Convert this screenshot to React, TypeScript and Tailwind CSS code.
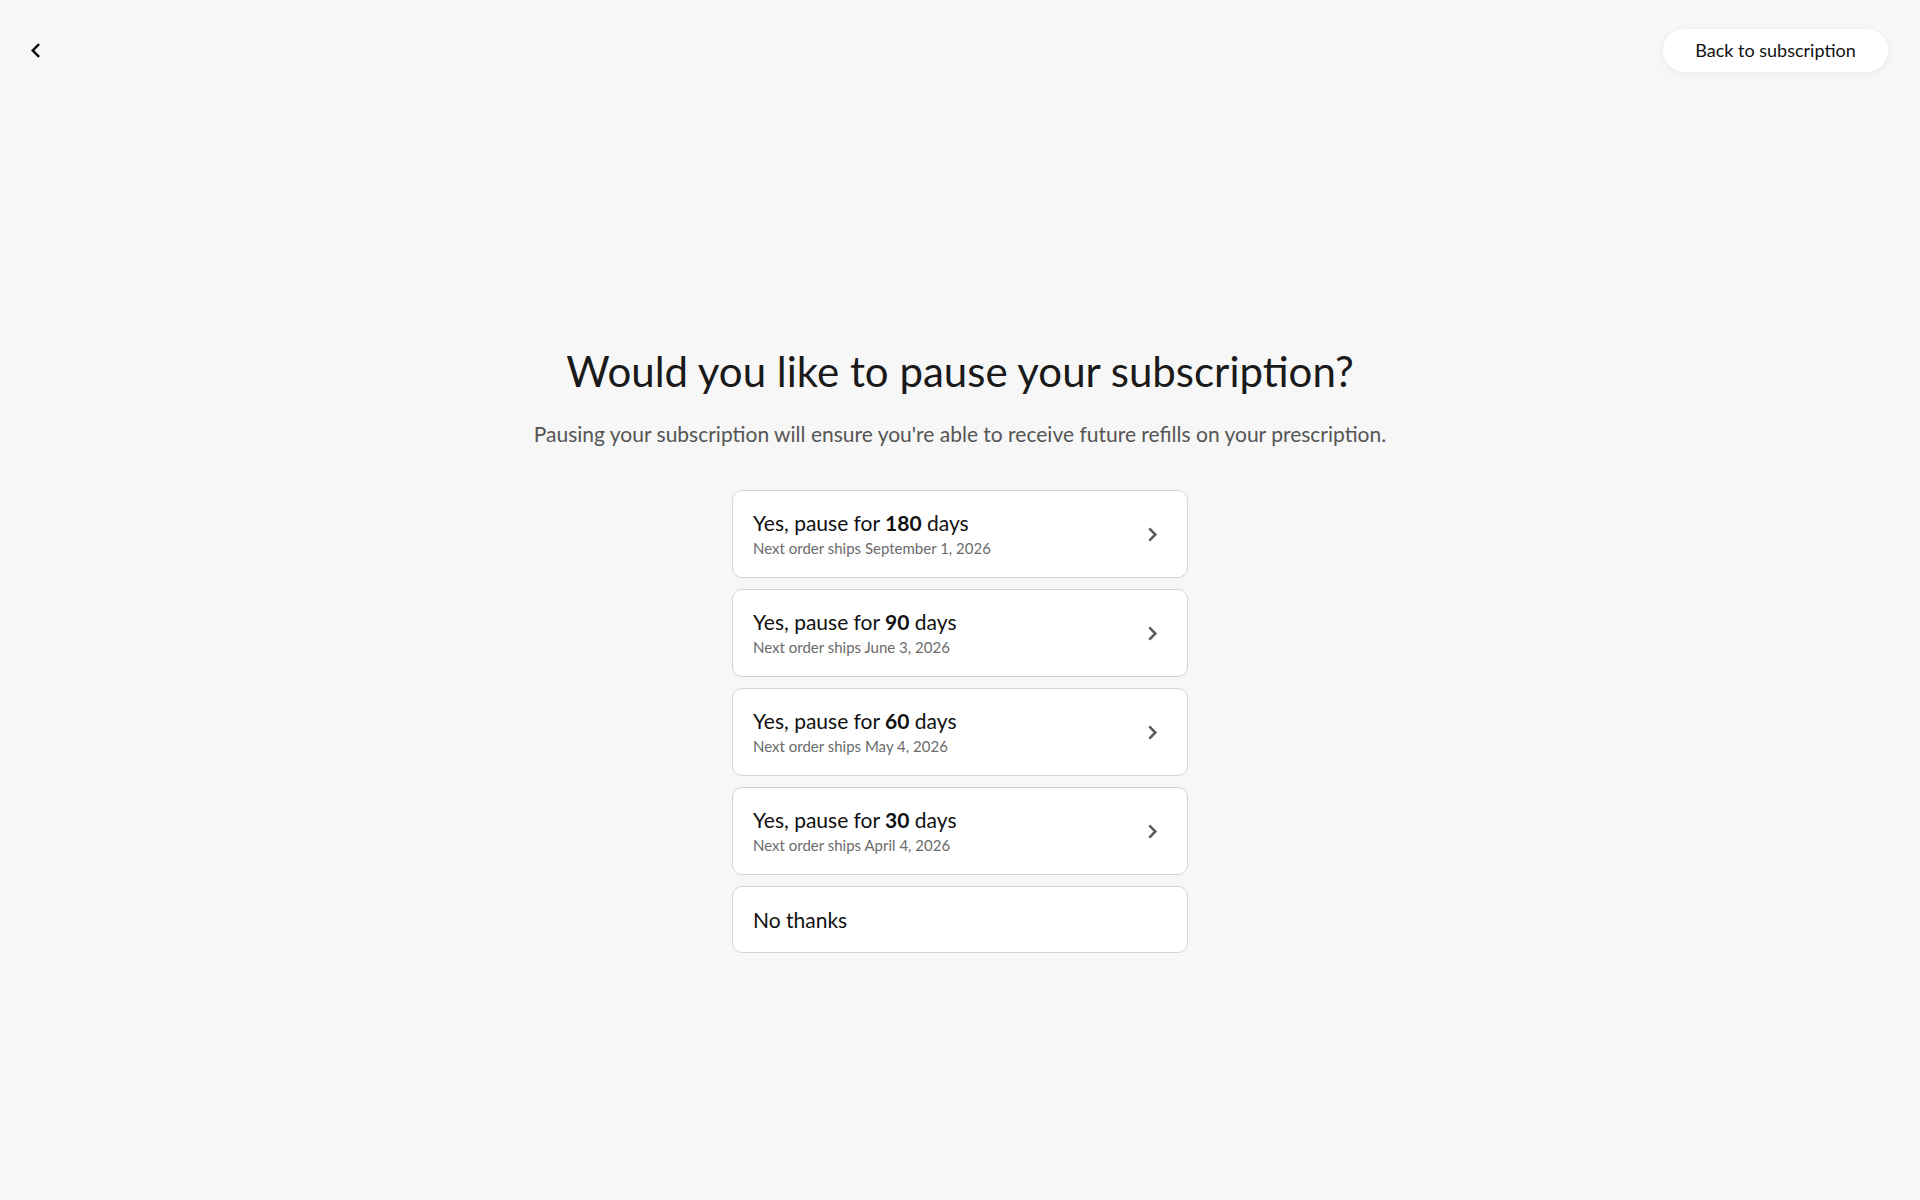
import React from "react";

const options = [
  { days: "180", date: "September 1, 2026" },
  { days: "90", date: "June 3, 2026" },
  { days: "60", date: "May 4, 2026" },
  { days: "30", date: "April 4, 2026" },
];

function BackChevron() {
  return (
    <svg viewBox="0 0 12 16" className="h-[15px] w-[11px]" fill="none" stroke="currentColor" strokeWidth={2.6} strokeLinecap="square" strokeLinejoin="miter">
      <path d="M9 2L3 8l6 6" />
    </svg>
  );
}

function RightChevron() {
  return (
    <svg viewBox="0 0 12 16" className="h-[15px] w-[12px] text-[#5a5a5a]" fill="none" stroke="currentColor" strokeWidth={2.7} strokeLinecap="square" strokeLinejoin="miter">
      <path d="M3 2.5L8.5 8 3 13.5" />
    </svg>
  );
}

export default function App() {
  return (
    <div className="min-h-[1200px] w-full bg-[#f7f7f7] text-[#1a1a1a]" style={{ fontFamily: "Lato, 'Noto Sans', sans-serif" }}>
      <header className="flex items-start justify-between pl-[30px] pr-[32px] pt-[29px]">
        <button className="mt-[14px] flex h-[15px] w-[11px] items-center justify-center text-black">
          <BackChevron />
        </button>
        <button className="flex h-[43px] w-[225px] items-center justify-center rounded-full bg-white text-[18px] text-[#111] shadow-[0_2px_8px_rgba(0,0,0,0.06)]">
          Back to subscription
        </button>
      </header>
      <main className="flex flex-col items-center pt-[274px]">
        <h1 className="text-[42px] leading-[50px] font-normal text-[#1a1a1a]">Would you like to pause your subscription?</h1>
        <p className="mt-[24px] text-[21px] leading-[28px] text-[#555]">
          Pausing your subscription will ensure you're able to receive future refills on your prescription.
        </p>
        <div className="mt-[42px] flex w-[456px] flex-col gap-[11px]">
          {options.map((o) => (
            <button
              key={o.days}
              className="flex h-[88px] items-center justify-between rounded-[10px] border border-[#d4d4d4] bg-white pl-[20px] pr-[28px] text-left"
            >
              <div className="-mt-[1px] flex flex-col">
                <span className="text-[21px] leading-[26px] text-[#111]">
                  Yes, pause for <span className="font-bold">{o.days}</span> days
                </span>
                <span className="mt-[2px] text-[15px] leading-[20px] text-[#6b6b6b]">Next order ships {o.date}</span>
              </div>
              <RightChevron />
            </button>
          ))}
          <button className="flex h-[67px] items-center rounded-[10px] border border-[#d4d4d4] bg-white pl-[20px] text-left text-[21px] text-[#111]">
            No thanks
          </button>
        </div>
      </main>
    </div>
  );
}
